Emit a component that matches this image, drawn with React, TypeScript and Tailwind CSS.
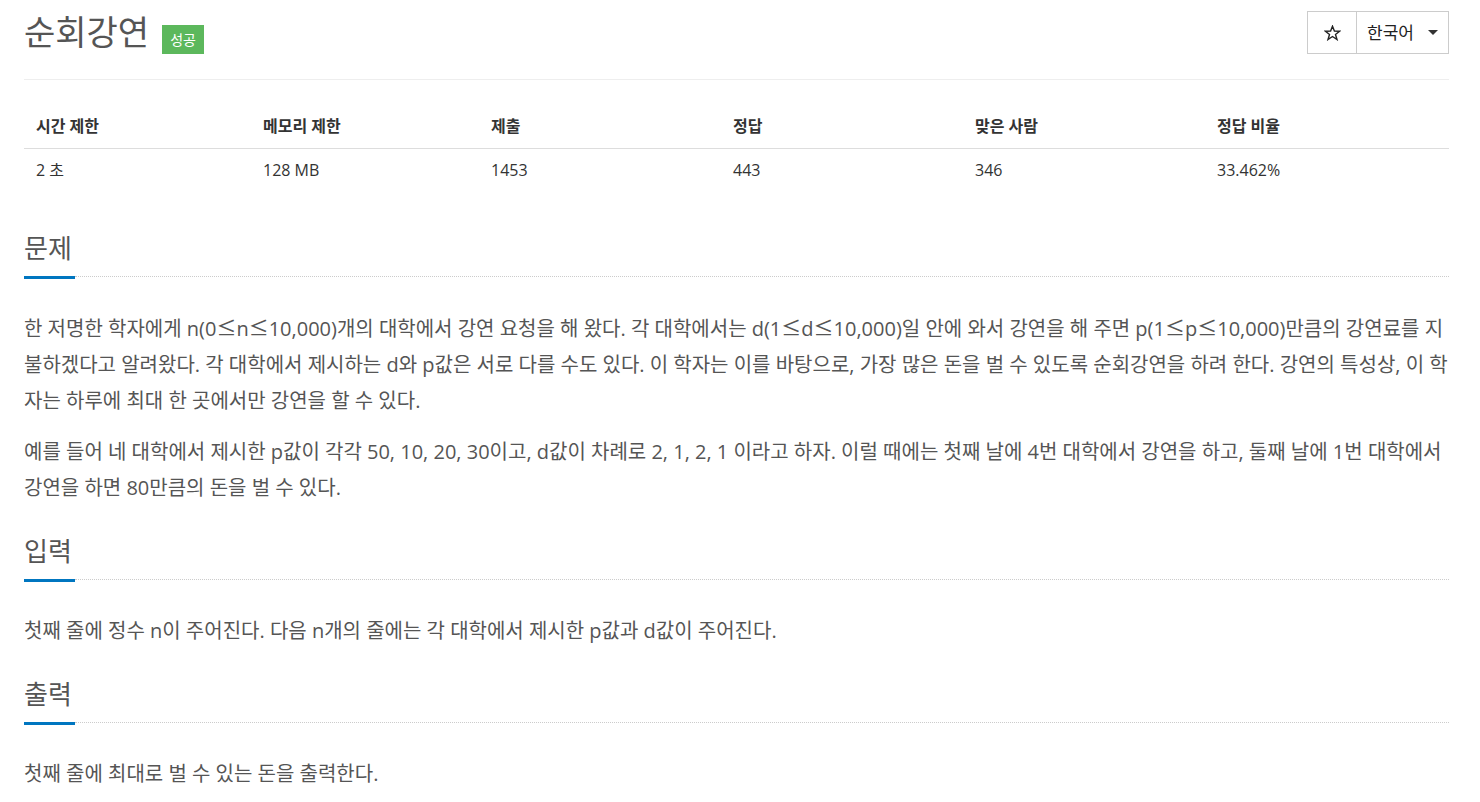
import React from 'react'

const stats = [
  { label: '시간 제한', value: '2 초', w: 'w-[227px]' },
  { label: '메모리 제한', value: '128 MB', w: 'w-[228px]' },
  { label: '제출', value: '1453', w: 'w-[242px]' },
  { label: '정답', value: '443', w: 'w-[242px]' },
  { label: '맞은 사람', value: '346', w: 'w-[242px]' },
  { label: '정답 비율', value: '33.462%', w: 'w-[244px]' },
]

// ≤ is drawn wide in the original, so give it the CJK face
function Le() {
  return <span className="font-['Noto_Sans_CJK_KR',sans-serif]">≤</span>
}

function Headline({ title }: { title: string }) {
  return (
    <div className="mt-[27px]">
      <h2 className="text-[26px] leading-[36px] text-[#555] font-normal">{title}</h2>
      <div className="flex mt-[10px]">
        <div className="w-[51px] h-[3px] bg-[#0076c0]" />
        <div className="flex-1 border-t border-dotted border-[#ccc]" />
      </div>
    </div>
  )
}

export default function App() {
  return (
    <div className="min-h-[802px] bg-white font-['Open_Sans','Noto_Sans_CJK_KR',sans-serif] text-[#333]">
      <div className="ml-6 w-[1425px]">
        {/* Title bar */}
        <div className="flex justify-between items-start h-[80px] border-b border-[#eee]">
          <div className="flex items-baseline gap-[13px] pt-[12px]">
            <h1 className="text-[34px] leading-[40px] text-[#555] font-normal">순회강연</h1>
            <span className="bg-[#5cb85c] text-white text-[14px] leading-[17px] px-[8px] py-[6px]">성공</span>
          </div>
          <div className="flex mt-[11px] border border-[#ccc] h-[43px]">
            <div className="w-[48px] flex items-center justify-center">
              <svg width="17" height="16" viewBox="0 0 17 16" fill="none">
                <path
                  d="M8.5 1.2 L10.4 6.1 L15.6 6.2 L11.5 9.4 L13 14.5 L8.5 11.5 L4 14.5 L5.5 9.4 L1.4 6.2 L6.6 6.1 Z"
                  stroke="#222"
                  strokeWidth="1.4"
                  strokeLinejoin="miter"
                />
              </svg>
            </div>
            <div className="w-[92px] border-l border-[#ccc] flex items-center pl-[10px] gap-[14px]">
              <span className="text-[17px] text-[#222]">한국어</span>
              <span className="w-0 h-0 border-l-[5px] border-r-[5px] border-t-[5px] border-l-transparent border-r-transparent border-t-[#333]" />
            </div>
          </div>
        </div>

        {/* Limits table */}
        <table className="mt-[28px] w-full border-collapse text-[16px]">
          <thead>
            <tr className="border-b border-[#ddd]">
              {stats.map((s) => (
                <th key={s.label} className={`${s.w} text-left font-bold pl-3 pt-2 pb-3 leading-5 text-[#333]`}>{s.label}</th>
              ))}
            </tr>
          </thead>
          <tbody>
            <tr>
              {stats.map((s) => (
                <td key={s.label} className="pl-3 py-[11px] leading-5">{s.value}</td>
              ))}
            </tr>
          </tbody>
        </table>

        {/* Problem */}
        <div className="mt-[39px]">
          <Headline title="문제" />
          <div className="mt-[31px] text-[20px] leading-[36px] text-[#555]">
            <p className="mb-[15px]">
              한 저명한 학자에게 n(0<Le />n<Le />10,000)개의 대학에서 강연 요청을 해 왔다. 각 대학에서는 d(1<Le />d<Le />10,000)일 안에 와서 강연을 해 주면 p(1<Le />p<Le />10,000)만큼의 강연료를 지불하겠다고 알려왔다. 각 대학에서 제시하는 d와 p값은 서로 다를 수도 있다. 이 학자는 이를 바탕으로, 가장 많은 돈을 벌 수 있도록 순회강연을 하려 한다. 강연의 특성상, 이 학자는 하루에 최대 한 곳에서만 강연을 할 수 있다.
            </p>
            <p className="mb-[15px]">
              예를 들어 네 대학에서 제시한 p값이 각각 50, 10, 20, 30이고, d값이 차례로 2, 1, 2, 1 이라고 하자. 이럴 때에는 첫째 날에 4번 대학에서 강연을 하고, 둘째 날에 1번 대학에서 강연을 하면 80만큼의 돈을 벌 수 있다.
            </p>
          </div>
        </div>

        {/* Input */}
        <Headline title="입력" />
        <div className="mt-[31px] text-[20px] leading-[36px] text-[#555]">
          <p className="mb-[15px]">첫째 줄에 정수 n이 주어진다. 다음 n개의 줄에는 각 대학에서 제시한 p값과 d값이 주어진다.</p>
        </div>

        {/* Output */}
        <Headline title="출력" />
        <div className="mt-[31px] text-[20px] leading-[36px] text-[#555]">
          <p className="mb-[15px]">첫째 줄에 최대로 벌 수 있는 돈을 출력한다.</p>
        </div>
      </div>
    </div>
  )
}
